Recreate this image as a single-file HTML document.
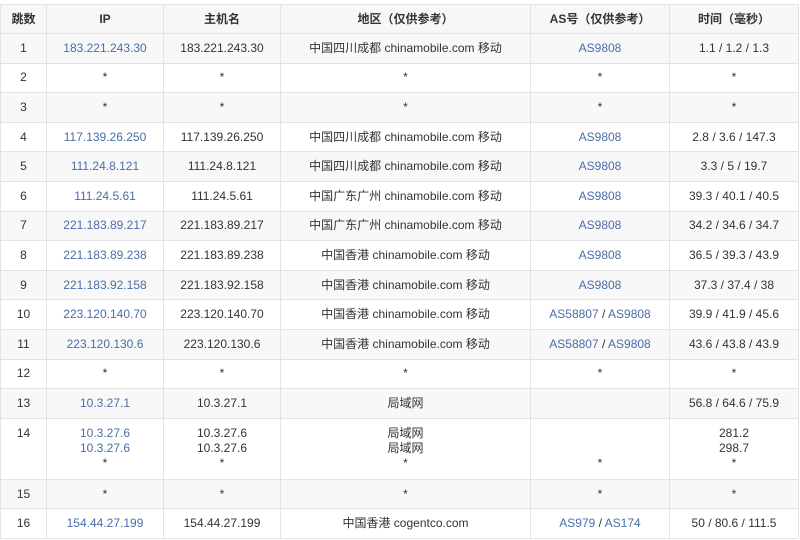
<!DOCTYPE html>
<html><head><meta charset="utf-8"><style>
html,body{margin:0;padding:0;background:#fff;width:800px;height:540px;overflow:hidden}
table{position:absolute;left:0;top:4px;border-collapse:collapse;table-layout:fixed;width:798px;font-family:"Liberation Sans","Noto Sans CJK SC",sans-serif;font-size:12px;color:#333}
td,th{border:1px solid #e3e3e3;text-align:center;padding:0;line-height:15px}
th{font-weight:bold;height:28px;background:#f7f7f7;color:#333}
tr.o td{background:#f8f8f8}
td{height:28.6px}
a{color:#4a6ea8;text-decoration:none}
tr.t td{height:53px;vertical-align:top;padding-top:7px;padding-bottom:0}
</style></head><body>
<table>
<colgroup><col style="width:46px"><col style="width:117px"><col style="width:117px"><col style="width:250px"><col style="width:139px"><col style="width:129px"></colgroup>
<tr><th>跳数</th><th>IP</th><th>主机名</th><th>地区（仅供参考）</th><th>AS号（仅供参考）</th><th>时间（毫秒）</th></tr>
<tr class="o"><td>1</td><td><a>183.221.243.30</a></td><td>183.221.243.30</td><td>中国四川成都 chinamobile.com 移动</td><td><a>AS9808</a></td><td>1.1 / 1.2 / 1.3</td></tr>
<tr><td>2</td><td>*</td><td>*</td><td>*</td><td>*</td><td>*</td></tr>
<tr class="o"><td>3</td><td>*</td><td>*</td><td>*</td><td>*</td><td>*</td></tr>
<tr><td>4</td><td><a>117.139.26.250</a></td><td>117.139.26.250</td><td>中国四川成都 chinamobile.com 移动</td><td><a>AS9808</a></td><td>2.8 / 3.6 / 147.3</td></tr>
<tr class="o"><td>5</td><td><a>111.24.8.121</a></td><td>111.24.8.121</td><td>中国四川成都 chinamobile.com 移动</td><td><a>AS9808</a></td><td>3.3 / 5 / 19.7</td></tr>
<tr><td>6</td><td><a>111.24.5.61</a></td><td>111.24.5.61</td><td>中国广东广州 chinamobile.com 移动</td><td><a>AS9808</a></td><td>39.3 / 40.1 / 40.5</td></tr>
<tr class="o"><td>7</td><td><a>221.183.89.217</a></td><td>221.183.89.217</td><td>中国广东广州 chinamobile.com 移动</td><td><a>AS9808</a></td><td>34.2 / 34.6 / 34.7</td></tr>
<tr><td>8</td><td><a>221.183.89.238</a></td><td>221.183.89.238</td><td>中国香港 chinamobile.com 移动</td><td><a>AS9808</a></td><td>36.5 / 39.3 / 43.9</td></tr>
<tr class="o"><td>9</td><td><a>221.183.92.158</a></td><td>221.183.92.158</td><td>中国香港 chinamobile.com 移动</td><td><a>AS9808</a></td><td>37.3 / 37.4 / 38</td></tr>
<tr><td>10</td><td><a>223.120.140.70</a></td><td>223.120.140.70</td><td>中国香港 chinamobile.com 移动</td><td><a>AS58807</a> / <a>AS9808</a></td><td>39.9 / 41.9 / 45.6</td></tr>
<tr class="o"><td>11</td><td><a>223.120.130.6</a></td><td>223.120.130.6</td><td>中国香港 chinamobile.com 移动</td><td><a>AS58807</a> / <a>AS9808</a></td><td>43.6 / 43.8 / 43.9</td></tr>
<tr><td>12</td><td>*</td><td>*</td><td>*</td><td>*</td><td>*</td></tr>
<tr class="o"><td>13</td><td><a>10.3.27.1</a></td><td>10.3.27.1</td><td>局域网</td><td></td><td>56.8 / 64.6 / 75.9</td></tr>
<tr class="t"><td>14</td><td><a>10.3.27.6</a><br><a>10.3.27.6</a><br>*</td><td>10.3.27.6<br>10.3.27.6<br>*</td><td>局域网<br>局域网<br>*</td><td><br><br>*</td><td>281.2<br>298.7<br>*</td></tr>
<tr class="o"><td>15</td><td>*</td><td>*</td><td>*</td><td>*</td><td>*</td></tr>
<tr><td>16</td><td><a>154.44.27.199</a></td><td>154.44.27.199</td><td>中国香港 cogentco.com</td><td><a>AS979</a> / <a>AS174</a></td><td>50 / 80.6 / 111.5</td></tr>
</table>
</body></html>
